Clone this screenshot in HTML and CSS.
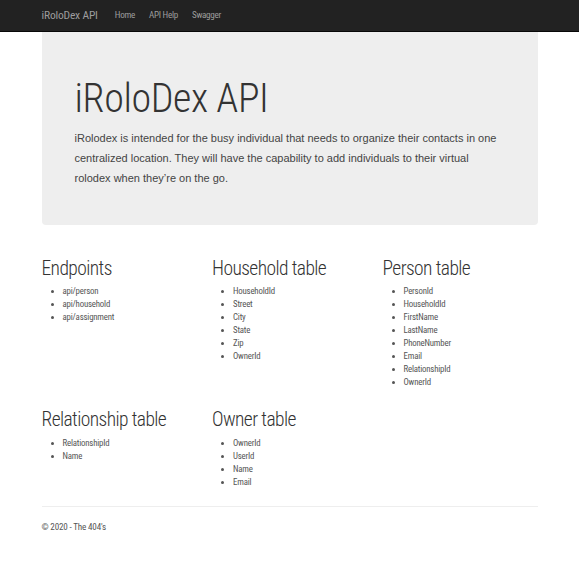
FILE: index.html
```html
<!DOCTYPE html>
<html>
<head>
<meta charset="utf-8">
<title>iRoloDex API</title>
<link rel="stylesheet" href="styles.css">
</head>
<body>
<nav class="navbar">
  <div class="nav-inner">
    <a class="brand" href="#">iRoloDex API</a>
    <a class="nav-link" href="#">Home</a>
    <a class="nav-link" href="#">API Help</a>
    <a class="nav-link" href="#">Swagger</a>
  </div>
</nav>
<div class="container">
  <div class="jumbotron">
    <h1>iRoloDex API</h1>
    <p class="lead">iRolodex is intended for the busy individual that needs to organize their contacts in one centralized location. They will have the capability to add individuals to their virtual rolodex when they’re on the go.</p>
  </div>
  <div class="row">
    <div class="col">
      <h2>Endpoints</h2>
      <ul>
        <li>api/person</li>
        <li>api/household</li>
        <li>api/assignment</li>
      </ul>
    </div>
    <div class="col">
      <h2>Household table</h2>
      <ul>
        <li>HouseholdId</li>
        <li>Street</li>
        <li>City</li>
        <li>State</li>
        <li>Zip</li>
        <li>OwnerId</li>
      </ul>
    </div>
    <div class="col">
      <h2>Person table</h2>
      <ul>
        <li>PersonId</li>
        <li>HouseholdId</li>
        <li>FirstName</li>
        <li>LastName</li>
        <li>PhoneNumber</li>
        <li>Email</li>
        <li>RelationshipId</li>
        <li>OwnerId</li>
      </ul>
    </div>
    <div class="col">
      <h2>Relationship table</h2>
      <ul>
        <li>RelationshipId</li>
        <li>Name</li>
      </ul>
    </div>
    <div class="col">
      <h2>Owner table</h2>
      <ul>
        <li>OwnerId</li>
        <li>UserId</li>
        <li>Name</li>
        <li>Email</li>
      </ul>
    </div>
  </div>
  <hr class="rule">
  <footer class="footer">
    <p>© 2020 - The 404's</p>
  </footer>
</div>
</body>
</html>
```
FILE: styles.css
```css
html, body {
  margin: 0;
  padding: 0;
}
body {
  font-family: "Roboto Condensed", "Roboto", "Liberation Sans", sans-serif;
  font-stretch: 75%;
  letter-spacing: -0.02em;
  font-size: 9.1px;
  line-height: 13px;
  color: #333;
  background: #fff;
}
a {
  text-decoration: none;
}
.navbar {
  background: #222;
  border-bottom: 1px solid #080808;
  height: 31px;
}
.nav-inner {
  width: 496px;
  margin: 0 auto;
  display: flex;
  align-items: center;
  height: 31px;
}
.brand {
  color: #9d9d9d;
  font-size: 11.5px;
  padding-right: 10px;
}
.nav-link {
  color: #9d9d9d;
  font-size: 9.1px;
  letter-spacing: -0.03em;
  padding: 0 7px;
}
.container {
  width: 496px;
  margin: 0 auto;
}
.jumbotron {
  background: #eee;
  border-radius: 0 0 4px 4px;
  padding: 32px 33px 27px;
  margin-bottom: 19.5px;
}
.jumbotron h1 {
  font-size: 40px;
  font-weight: 300;
  letter-spacing: -0.01em;
  line-height: 1.1;
  margin: 13px 0 7px;
}
.lead {
  font-family: "Liberation Sans", Arial, sans-serif;
  font-stretch: normal;
  letter-spacing: 0;
  font-size: 11px;
  line-height: 20px;
  color: #444;
  margin: 0 0 10px;
}
.row {
  display: grid;
  grid-template-columns: repeat(3, 1fr);
  column-gap: 15.5px;
}
.col h2 {
  font-size: 19.5px;
  font-weight: 300;
  letter-spacing: -0.03em;
  line-height: 1.1;
  margin: 13px 0 6.5px;
}
.col ul {
  margin: 0 0 6.5px;
  padding-left: 21px;
  font-size: 8.8px;
  color: #555;
}
.rule {
  border: 0;
  border-top: 1px solid #eee;
  margin: 11px 0 14px;
}
.footer p {
  margin: 0 0 6.5px;
  color: #555;
}
```
